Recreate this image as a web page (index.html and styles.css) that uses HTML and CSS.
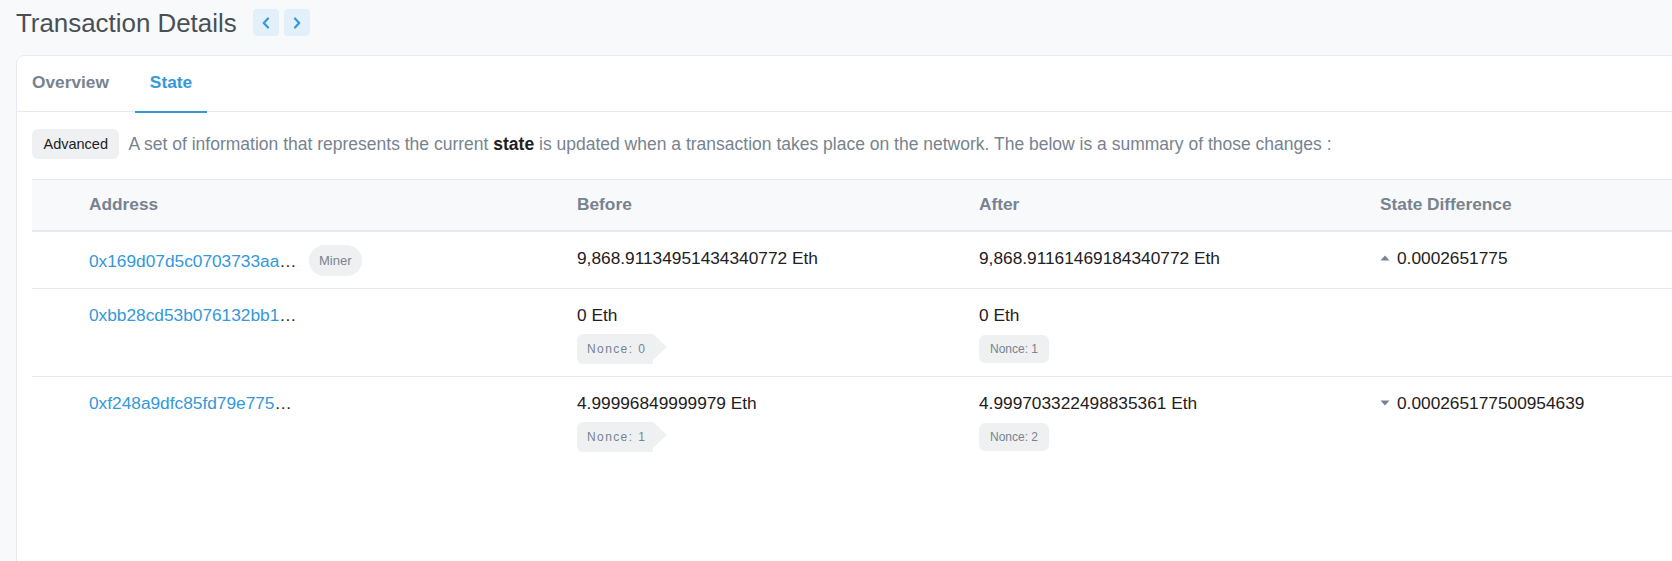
FILE: index.html
```html
<!DOCTYPE html>
<html lang="en">
<head>
<meta charset="utf-8">
<title>Transaction Details</title>
<link rel="stylesheet" href="styles.css">
</head>
<body>
<div class="page">
  <header class="head">
    <h1 class="title">Transaction Details</h1>
    <div class="navbtns">
      <a class="navbtn" href="#" aria-label="Previous">
        <svg width="10" height="12" viewBox="0 0 10 12"><path d="M7 1.5 L2.8 6 L7 10.5" fill="none" stroke="#3498db" stroke-width="2.2" stroke-linecap="round" stroke-linejoin="round"/></svg>
      </a>
      <a class="navbtn" href="#" aria-label="Next">
        <svg width="10" height="12" viewBox="0 0 10 12"><path d="M3 1.5 L7.2 6 L3 10.5" fill="none" stroke="#3498db" stroke-width="2.2" stroke-linecap="round" stroke-linejoin="round"/></svg>
      </a>
    </div>
  </header>

  <section class="card">
    <nav class="tabs">
      <a class="tab" href="#">Overview</a>
      <a class="tab active" href="#">State</a>
    </nav>
    <div class="card-body">
      <div class="intro">
        <span class="badge-adv">Advanced</span>
        <span class="desc">A set of information that represents the current <b>state</b> is updated when a transaction takes place on the network. The below is a summary of those changes :</span>
      </div>

      <table class="state-table">
        <colgroup>
          <col class="c-icon">
          <col class="c-addr">
          <col class="c-before">
          <col class="c-after">
          <col class="c-diff">
        </colgroup>
        <thead>
          <tr>
            <th></th>
            <th>Address</th>
            <th>Before</th>
            <th>After</th>
            <th>State Difference</th>
          </tr>
        </thead>
        <tbody>
          <tr>
            <td></td>
            <td><div class="addr"><span class="trunc"><a href="#">0x169d07d5c0703733aa20c1d0ec4fdf5b6dfd9d80</a></span><span class="pill">Miner</span></div></td>
            <td><div class="val">9,868.91134951434340772 Eth</div></td>
            <td><div class="val">9,868.91161469184340772 Eth</div></td>
            <td><div class="diff"><svg class="tri" width="10" height="6" viewBox="0 0 10 6"><polygon points="0.5,5.5 5,0.5 9.5,5.5" fill="#77838f"/></svg><span>0.0002651775</span></div></td>
          </tr>
          <tr>
            <td></td>
            <td><div class="addr"><span class="trunc"><a href="#">0xbb28cd53b076132bb1a8b5f44e4e1ae7dbdb8c2e</a></span></div></td>
            <td><div class="val">0 Eth</div><span class="nonce arrow">Nonce: 0</span></td>
            <td><div class="val">0 Eth</div><span class="nonce">Nonce: 1</span></td>
            <td></td>
          </tr>
          <tr>
            <td></td>
            <td><div class="addr"><span class="trunc"><a href="#">0xf248a9dfc85fd79e7756b8d0a1e8a63c8f5ee5a4</a></span></div></td>
            <td><div class="val">4.99996849999979 Eth</div><span class="nonce arrow">Nonce: 1</span></td>
            <td><div class="val">4.999703322498835361 Eth</div><span class="nonce">Nonce: 2</span></td>
            <td><div class="diff"><svg class="tri" width="10" height="6" viewBox="0 0 10 6"><polygon points="0.5,0.5 9.5,0.5 5,5.5" fill="#77838f"/></svg><span>0.000265177500954639</span></div></td>
          </tr>
        </tbody>
      </table>
    </div>
  </section>
</div>
</body>
</html>
```

FILE: styles.css
```css
html, body {
  margin: 0;
  padding: 0;
  overflow: hidden;
}

body {
  background: #f8f9fa;
  font-family: "Liberation Sans", Arial, Helvetica, sans-serif;
  font-size: 17.3px;
  line-height: 26px;
  color: #1e2022;
}

a {
  text-decoration: none;
  color: #3498db;
}

.page {
  width: 1720px;
  padding-left: 16px;
}

.head {
  height: 45px;
  display: flex;
  align-items: center;
}

.title {
  margin: 0;
  font-size: 25.9px;
  line-height: 30px;
  font-weight: 400;
  color: #4a4f55;
}

.navbtns {
  display: flex;
  gap: 5px;
  margin-left: 16px;
}

.navbtn {
  width: 26px;
  height: 27px;
  border-radius: 4px;
  background: #e3eff9;
  display: flex;
  align-items: center;
  justify-content: center;
}

.card {
  margin-top: 10px;
  background: #fff;
  border: 1px solid #e7eaf3;
  border-radius: 8px;
  min-height: 560px;
}

.tabs {
  display: flex;
  gap: 11px;
  height: 55px;
  border-bottom: 1px solid #e7eaf3;
}

.tab {
  height: 57px;
  box-sizing: border-box;
  padding: 12px 15px 0;
  line-height: 28px;
  font-weight: 700;
  color: #77838f;
  border-bottom: 2px solid transparent;
}

.tab.active {
  color: #3498db;
  border-bottom-color: #3498db;
}

.card-body {
  padding: 16px 0 0 15px;
}

.intro {
  display: flex;
  align-items: center;
  height: 31px;
}

.badge-adv {
  display: inline-flex;
  align-items: center;
  height: 30px;
  padding: 0 10.5px 0 11.5px;
  border-radius: 6px;
  background: #eef0f2;
  font-size: 14.5px;
  color: #1e2022;
}

.desc {
  margin-left: 10px;
  font-size: 17.5px;
  color: #77838f;
  white-space: nowrap;
}

.desc b {
  color: #1e2022;
}

.state-table {
  margin-top: 20px;
  border-collapse: collapse;
  table-layout: fixed;
  width: 1700px;
}

.c-icon { width: 45px; }
.c-addr { width: 488px; }
.c-before { width: 402px; }
.c-after { width: 401px; }

.state-table thead tr {
  background: #f8f9fb;
  border-top: 1px solid #e7eaf3;
  border-bottom: 2px solid #e7eaf3;
}

.state-table th {
  text-align: left;
  padding: 11px 12px 13px;
  font-weight: 700;
  color: #77838f;
}

.state-table td {
  vertical-align: top;
  padding: 13px 12px 12px;
}

.state-table tbody tr {
  border-bottom: 1px solid #e7eaf3;
}

.state-table tbody tr:last-child {
  border-bottom: none;
}

.addr {
  display: flex;
  align-items: center;
  gap: 10px;
}

.trunc {
  display: inline-block;
  max-width: 210px;
  overflow: hidden;
  white-space: nowrap;
  text-overflow: ellipsis;
  color: #1e2022;
}

.pill {
  display: inline-flex;
  align-items: center;
  height: 31px;
  padding: 0 10px;
  border-radius: 16px;
  background: #eef0f2;
  color: #77838f;
  font-size: 13px;
}

.val {
  white-space: nowrap;
}

.nonce {
  display: inline-flex;
  align-items: center;
  height: 28px;
  margin-top: 7px;
  padding: 0 11px;
  border-radius: 6px;
  background: #eef0f2;
  color: #77838f;
  font-size: 12px;
}

.nonce.arrow {
  position: relative;
  height: 30px;
  margin-top: 6px;
  padding: 0 7px 0 10px;
  letter-spacing: 1.4px;
  border-radius: 6px 0 0 6px;
}

.nonce.arrow::after {
  content: "";
  position: absolute;
  left: 100%;
  top: 0;
  border-left: 14px solid #eef0f2;
  border-top: 13px solid transparent;
  border-bottom: 13px solid transparent;
}

.diff {
  display: flex;
  align-items: center;
  gap: 7px;
}

.tri {
  display: block;
  flex: none;
}
```
